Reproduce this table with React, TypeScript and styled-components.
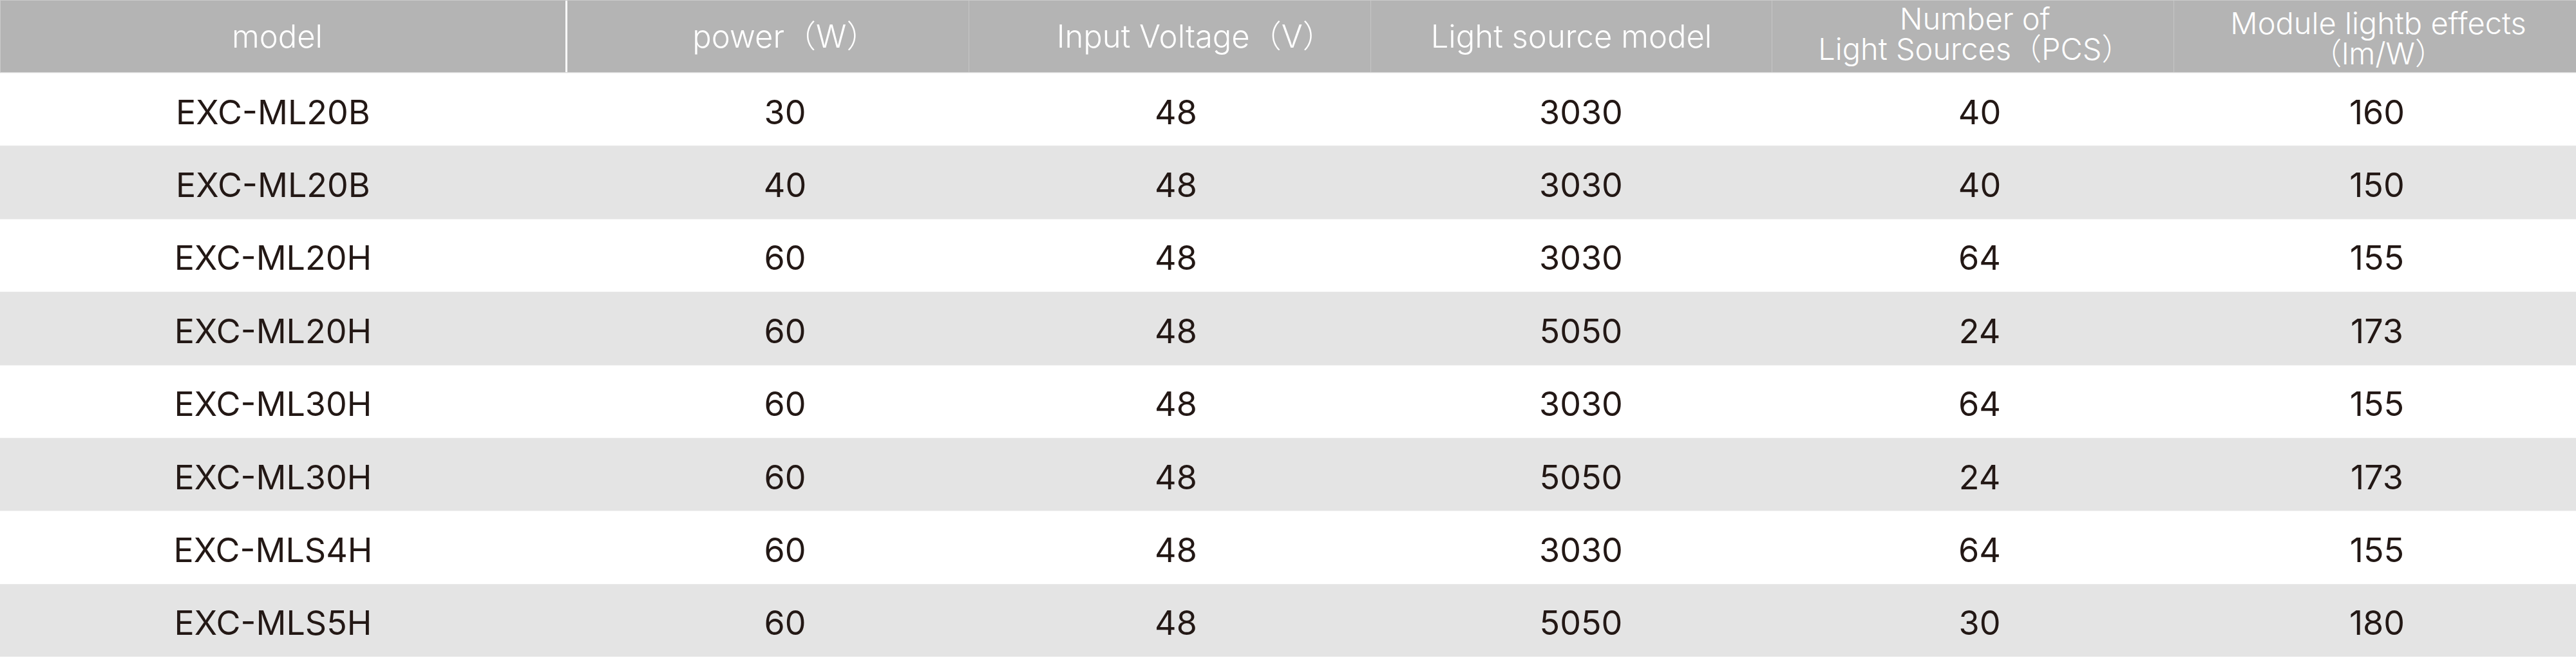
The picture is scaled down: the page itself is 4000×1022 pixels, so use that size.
import React from "react";
import styled, { createGlobalStyle } from "styled-components";

const GlobalStyle = createGlobalStyle`
  html, body {
    margin: 0;
    padding: 0;
    background: #ffffff;
  }
  body {
    font-family: Inter, "Noto Sans CJK SC", sans-serif;
  }
`;

type Spec = {
  model: string;
  power: string;
  voltage: string;
  source: string;
  count: string;
  efficacy: string;
};

const specs: Spec[] = [
  { model: "EXC-ML20B", power: "30", voltage: "48", source: "3030", count: "40", efficacy: "160" },
  { model: "EXC-ML20B", power: "40", voltage: "48", source: "3030", count: "40", efficacy: "150" },
  { model: "EXC-ML20H", power: "60", voltage: "48", source: "3030", count: "64", efficacy: "155" },
  { model: "EXC-ML20H", power: "60", voltage: "48", source: "5050", count: "24", efficacy: "173" },
  { model: "EXC-ML30H", power: "60", voltage: "48", source: "3030", count: "64", efficacy: "155" },
  { model: "EXC-ML30H", power: "60", voltage: "48", source: "5050", count: "24", efficacy: "173" },
  { model: "EXC-MLS4H", power: "60", voltage: "48", source: "3030", count: "64", efficacy: "155" },
  { model: "EXC-MLS5H", power: "60", voltage: "48", source: "5050", count: "30", efficacy: "180" },
];

const keys: (keyof Spec)[] = ["model", "power", "voltage", "source", "count", "efficacy"];

// the source table isn't centred exactly, nudge each column a bit
const headShift = [-9, 27, 40, 0, 3, 5];
const cellShift = [-16, 27, 10, 15, 10, 3];

const nudge = (s: number) => (s >= 0 ? `0 0 0 ${s * 2}px` : `0 ${-s * 2}px 0 0`);

const Table = styled.div`
  width: 4000px;
  display: flex;
  flex-direction: column;
`;

const HeaderRow = styled.div`
  display: grid;
  grid-template-columns: 880px repeat(5, 1fr);
  height: 113px;
  background: #b4b4b4;
  border-top: 1px solid #cacaca;
  border-left: 1px solid #cacaca;
  border-bottom: 1px solid #d8d8d8;
  box-sizing: border-box;
`;

const HeadCell = styled.div<{ $first?: boolean; $shift: number }>`
  display: flex;
  align-items: center;
  justify-content: center;
  text-align: center;
  padding: ${(p) => nudge(p.$shift)};
  color: #ffffff;
  font-family: Inter, "Noto Sans CJK SC", sans-serif;
  font-weight: 300;
  font-size: 49px;
  line-height: 49px;
  white-space: nowrap;
  border-right: ${(p) => (p.$first ? "3px solid #ffffff" : "1px solid #c6c6c6")};
  &:last-child {
    border-right: none;
  }
`;

const TwoLine = styled.span<{ $drop: number }>`
  display: block;
  font-size: 47px;
  line-height: 47px;
  margin-top: ${(p) => p.$drop}px;
`;

const DataRow = styled.div<{ $shade: boolean }>`
  display: grid;
  grid-template-columns: 880px repeat(5, 1fr);
  height: 113.4px;
  background: ${(p) => (p.$shade ? "#e4e4e4" : "#ffffff")};
  border-top: 1px solid ${(p) => (p.$shade ? "#e9e9e9" : "#f2f2f2")};
  box-sizing: border-box;
`;

const Cell = styled.div<{ $shift: number }>`
  display: flex;
  align-items: center;
  justify-content: center;
  padding: ${(p) => nudge(p.$shift)};
  padding-top: 8px;
  color: #231815;
  font-family: Inter, sans-serif;
  font-weight: 400;
  font-size: 52px;
`;

export default function App() {
  return (
    <>
      <GlobalStyle />
      <Table>
        <HeaderRow>
          <HeadCell $first $shift={headShift[0]}>model</HeadCell>
          <HeadCell $shift={headShift[1]}>power（W）</HeadCell>
          <HeadCell $shift={headShift[2]}>Input Voltage（V）</HeadCell>
          <HeadCell $shift={headShift[3]}>Light source model</HeadCell>
          <HeadCell $shift={headShift[4]}>
            <TwoLine $drop={-10}>
              Number of
              <br />
              Light Sources（PCS）
            </TwoLine>
          </HeadCell>
          <HeadCell $shift={headShift[5]}>
            <TwoLine $drop={4}>
              Module lightb effects
              <br />
              （lm/W）
            </TwoLine>
          </HeadCell>
        </HeaderRow>
        {specs.map((s, i) => (
          <DataRow key={i} $shade={i % 2 === 1}>
            {keys.map((k, c) => (
              <Cell key={k} $shift={cellShift[c]}>
                {s[k]}
              </Cell>
            ))}
          </DataRow>
        ))}
      </Table>
    </>
  );
}
